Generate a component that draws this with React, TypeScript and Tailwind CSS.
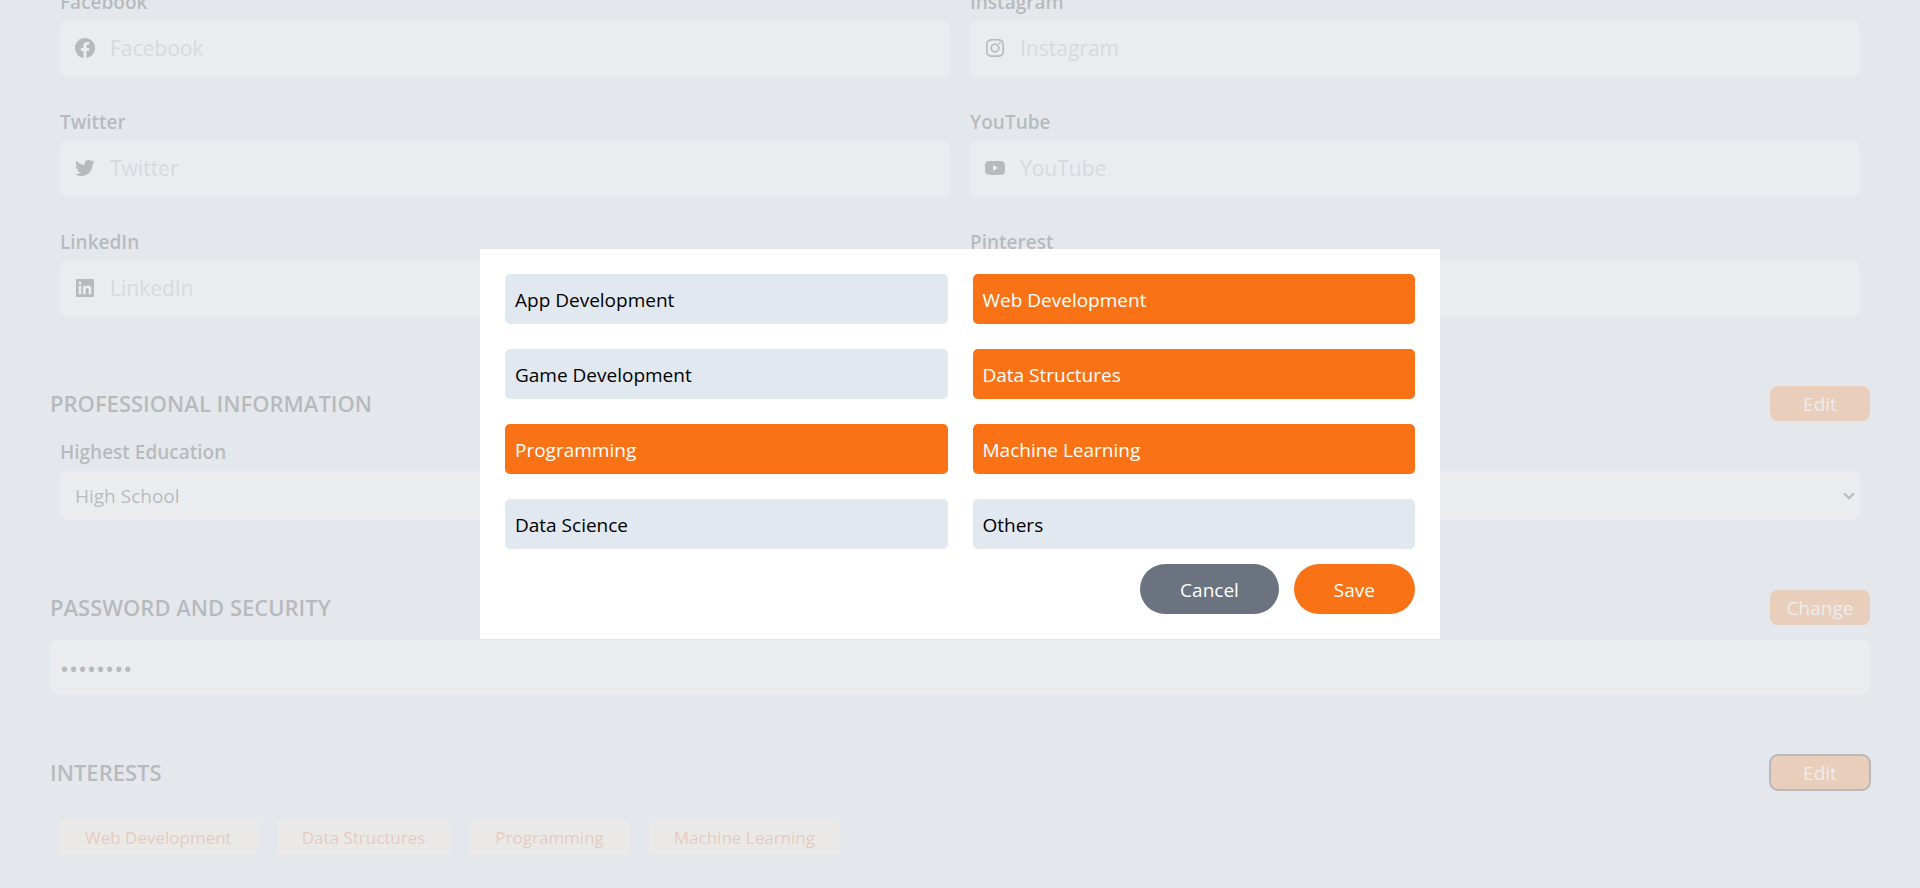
import { useState } from "react";
import type { ReactNode } from "react";
import type { IconType } from "react-icons";
import {
  BiLogoFacebookCircle,
  BiLogoInstagram,
  BiLogoLinkedinSquare,
  BiLogoPinterest,
  BiLogoTwitter,
  BiLogoYoutube,
} from "react-icons/bi";
import { ChevronDown } from "lucide-react";

const socials: { name: string; Icon: IconType }[] = [
  { name: "Facebook", Icon: BiLogoFacebookCircle },
  { name: "Instagram", Icon: BiLogoInstagram },
  { name: "Twitter", Icon: BiLogoTwitter },
  { name: "YouTube", Icon: BiLogoYoutube },
  { name: "LinkedIn", Icon: BiLogoLinkedinSquare },
  { name: "Pinterest", Icon: BiLogoPinterest },
];

const topics = [
  "App Development",
  "Web Development",
  "Game Development",
  "Data Structures",
  "Programming",
  "Machine Learning",
  "Data Science",
  "Others",
];

const savedInterests = ["Web Development", "Data Structures", "Programming", "Machine Learning"];

function SocialField({ name, Icon }: { name: string; Icon: IconType }) {
  const id = `social-${name.toLowerCase()}`;
  return (
    <div>
      <label htmlFor={id} className="mb-[5px] block text-[19px] leading-7 font-semibold">
        {name}
      </label>
      <div className="flex h-[55px] items-center rounded-lg bg-white pb-px pl-[13px]">
        <Icon className="size-6 shrink-0" aria-hidden="true" />
        <input
          id={id}
          type="text"
          placeholder={name}
          className="ml-[13px] h-full min-w-0 flex-1 bg-transparent text-[21px] outline-none placeholder:text-gray-400"
        />
      </div>
    </div>
  );
}

function SectionHeader({ title, action, focused }: { title: string; action: string; focused?: boolean }) {
  return (
    <div className="flex items-center justify-between">
      <h2 className="text-[22px] leading-[35px] font-semibold">{title}</h2>
      <button
        type="button"
        className={
          focused
            ? "h-[35px] w-[100px] rounded-lg bg-orange-500 pt-0.5 text-[19px] text-white outline-2 -outline-offset-1 outline-black"
            : "h-[35px] w-[100px] rounded-lg bg-orange-500 pt-0.5 text-[19px] text-white"
        }
      >
        {action}
      </button>
    </div>
  );
}

function Overlay({ children }: { children: ReactNode }) {
  return (
    <div className="fixed inset-0 flex items-center justify-center bg-[#e5e7eb]/80">{children}</div>
  );
}

function InterestsDialog() {
  const [selected, setSelected] = useState<string[]>(savedInterests);
  const toggle = (topic: string) =>
    setSelected((current) =>
      current.includes(topic) ? current.filter((t) => t !== topic) : [...current, topic],
    );
  return (
    <div role="dialog" aria-label="Interests" className="w-1/2 bg-white p-[25px]">
      <div className="grid grid-cols-2 gap-[25px]">
        {topics.map((topic) => (
          <button
            key={topic}
            type="button"
            aria-pressed={selected.includes(topic)}
            onClick={() => toggle(topic)}
            className={
              selected.includes(topic)
                ? "h-[50px] rounded-[5px] bg-[#f97316] px-2.5 pt-0.5 text-left text-[19px] text-white"
                : "h-[50px] rounded-[5px] bg-[#e2e8f0] px-2.5 pt-0.5 text-left text-[19px] text-black"
            }
          >
            {topic}
          </button>
        ))}
      </div>
      <div className="mt-[15px] flex justify-end gap-[15px]">
        <button type="button" className="h-[50px] rounded-full bg-[#6b7280] px-10 pt-0.5 text-[19px] text-white">
          Cancel
        </button>
        <button type="button" className="h-[50px] rounded-full bg-[#f97316] px-10 pt-0.5 text-[19px] text-white">
          Save
        </button>
      </div>
    </div>
  );
}

export default function App() {
  return (
    <div className="h-screen overflow-hidden bg-slate-200 font-['Open_Sans',sans-serif] text-black">
      <main className="-mt-3 px-[50px]">
        <section className="grid grid-cols-2 gap-x-5 gap-y-8 px-2.5">
          {socials.map((social) => (
            <SocialField key={social.name} name={social.name} Icon={social.Icon} />
          ))}
        </section>

        <section className="mt-[70px]">
          <SectionHeader title="PROFESSIONAL INFORMATION" action="Edit" />
          <div className="mt-[17px] px-2.5">
            <label htmlFor="education" className="mb-[5px] block text-[19px] leading-7 font-semibold">
              Highest Education
            </label>
            <div className="relative">
              <select
                id="education"
                defaultValue="High School"
                className="block h-[49px] w-full appearance-none rounded-lg bg-white pt-0.5 pr-10 pl-[15px] text-[19px] outline-none"
              >
                <option>High School</option>
                <option>Bachelor</option>
                <option>Master</option>
              </select>
              <ChevronDown
                className="pointer-events-none absolute inset-y-0 right-0.5 my-auto size-[18px]"
                strokeWidth={2.5}
                aria-hidden="true"
              />
            </div>
          </div>
        </section>

        <section className="mt-[70px]">
          <SectionHeader title="PASSWORD AND SECURITY" action="Change" />
          <input
            type="password"
            aria-label="Password"
            defaultValue="password"
            className="mt-[15px] block h-[55px] w-full rounded-lg bg-white px-2.5 pt-0.5 text-[24px] outline-none"
          />
        </section>

        <section className="mt-[60px]">
          <SectionHeader title="INTERESTS" action="Edit" focused />
          <ul className="mt-[30px] flex gap-5 px-2.5">
            {savedInterests.map((interest) => (
              <li
                key={interest}
                className="rounded-xs bg-[#ffedd5] px-[25px] text-[17px] leading-[35px] font-medium text-[#ea580c]"
              >
                {interest}
              </li>
            ))}
          </ul>
        </section>
      </main>

      <Overlay>
        <InterestsDialog />
      </Overlay>
    </div>
  );
}
